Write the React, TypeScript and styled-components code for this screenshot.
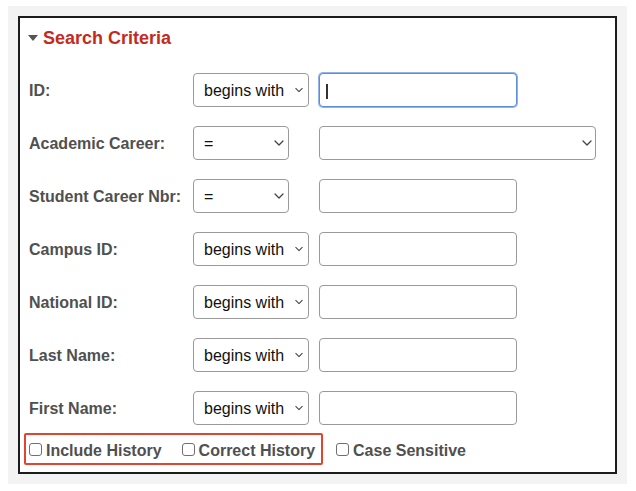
import React from "react";
import styled, { createGlobalStyle } from "styled-components";

const GlobalStyle = createGlobalStyle`
    html, body {
        margin: 0;
        padding: 0;
        background: #ffffff;
    }
    * {
        box-sizing: border-box;
    }
`;

const StyledFrame = styled.div`
    margin: 6px 9px 7px 8px;
    padding: 10px;
    background: #f3f3f3;
    font-family: "Liberation Sans", Arial, sans-serif;
`;

const StyledPanel = styled.div`
    border: 2px solid #1c1c1c;
    background: #ffffff;
    padding: 8px 0 7px 0;
`;

const StyledTitle = styled.div`
    display: flex;
    align-items: center;
    gap: 5px;
    padding-left: 8px;
    height: 24px;
    font-size: 18px;
    font-weight: bold;
    color: #c42b1c;
`;

const StyledTriangle = styled.span`
    width: 0;
    height: 0;
    border-left: 5px solid transparent;
    border-right: 5px solid transparent;
    border-top: 6px solid #555555;
    margin-top: -1px;
`;

const StyledForm = styled.div`
    display: grid;
    grid-template-columns: 164px 126px 1fr;
    grid-auto-rows: 34px;
    row-gap: 19px;
    align-items: center;
    margin-top: 23px;
    padding-left: 9px;
`;

const StyledLabel = styled.label`
    padding-top: 1px;
    font-size: 16px;
    font-weight: bold;
    color: #505050;
    white-space: nowrap;
`;

const StyledSelectWrap = styled.div<{ $width: number }>`
    position: relative;
    width: ${(p) => p.$width}px;
    height: 34px;
`;

const StyledSelect = styled.select`
    appearance: none;
    -webkit-appearance: none;
    width: 100%;
    height: 100%;
    margin: 0;
    padding: 0 20px 0 10px;
    border: 1px solid #9a9a9a;
    border-radius: 4px;
    background: #ffffff;
    font-family: "Liberation Sans", Arial, sans-serif;
    font-size: 16px;
    color: #111111;
    outline: none;
`;

const StyledChevron = styled.svg<{ $right: number }>`
    position: absolute;
    right: ${(p) => p.$right}px;
    top: 50%;
    transform: translateY(-50%);
    pointer-events: none;
`;

const StyledInputWrap = styled.div<{ $width: number }>`
    position: relative;
    width: ${(p) => p.$width}px;
    height: 34px;
`;

const StyledInput = styled.input<{ $focused?: boolean }>`
    width: 100%;
    height: 100%;
    margin: 0;
    padding: 0 8px;
    border: 1px solid ${(p) => (p.$focused ? "#5b8fdc" : "#9a9a9a")};
    box-shadow: ${(p) => (p.$focused ? "0 0 0 1px #8fb3ea" : "none")};
    border-radius: 4px;
    background: #ffffff;
    font-family: "Liberation Sans", Arial, sans-serif;
    font-size: 16px;
    outline: none;
`;

const StyledCaret = styled.span`
    position: absolute;
    left: 7px;
    top: 11px;
    width: 1.5px;
    height: 15px;
    background: #333333;
`;

const StyledCheckRow = styled.div`
    display: flex;
    align-items: center;
    margin-top: 8px;
    margin-left: 4px;
`;

const StyledHighlight = styled.div`
    display: flex;
    align-items: center;
    gap: 20px;
    height: 32px;
    padding: 3px 6px 0 3px;
    border: 2px solid #e2452f;
    border-radius: 2px;
`;

const StyledCheckItem = styled.label<{ $offset?: number }>`
    display: flex;
    align-items: center;
    gap: 4px;
    margin-left: ${(p) => p.$offset || 0}px;
    padding-top: ${(p) => (p.$offset ? 3 : 0)}px;
    font-size: 16px;
    font-weight: bold;
    color: #505050;
    white-space: nowrap;
`;

const StyledCheckbox = styled.input`
    appearance: none;
    -webkit-appearance: none;
    width: 13px;
    height: 13px;
    margin: -2px 0 0 0;
    border: 1px solid #6f6f6f;
    border-radius: 3px;
    background: #ffffff;
`;

const Chevron = ({ size, right }: { size: number; right: number }) => (
    <StyledChevron
        $right={right}
        width={size}
        height={size * 0.6}
        viewBox="0 0 10 6"
    >
        <path
            d="M1 1 L5 5 L9 1"
            fill="none"
            stroke="#444"
            strokeWidth="1.3"
            strokeLinecap="round"
            strokeLinejoin="round"
        />
    </StyledChevron>
);

const Select = ({ value, width, chevron, right }: { value: string; width: number; chevron: number; right: number }) => (
    <StyledSelectWrap $width={width}>
        <StyledSelect defaultValue={value}>
            <option value={value}>{value}</option>
        </StyledSelect>
        <Chevron size={chevron} right={right} />
    </StyledSelectWrap>
);

const rows = [
    { label: "ID:", op: "begins with", kind: "focus" },
    { label: "Academic Career:", op: "=", kind: "select" },
    { label: "Student Career Nbr:", op: "=", kind: "input" },
    { label: "Campus ID:", op: "begins with", kind: "input" },
    { label: "National ID:", op: "begins with", kind: "input" },
    { label: "Last Name:", op: "begins with", kind: "input" },
    { label: "First Name:", op: "begins with", kind: "input" },
];

export default function App() {
    return (
        <>
            <GlobalStyle />
            <StyledFrame>
                <StyledPanel>
                    <StyledTitle>
                        <StyledTriangle />
                        Search Criteria
                    </StyledTitle>
                    <StyledForm>
                        {rows.map((row) => (
                            <React.Fragment key={row.label}>
                                <StyledLabel>{row.label}</StyledLabel>
                                {row.op === "=" ? (
                                    <Select value="=" width={96} chevron={10} right={5} />
                                ) : (
                                    <Select value="begins with" width={116} chevron={8} right={6} />
                                )}
                                {row.kind === "select" ? (
                                    <Select value="" width={277} chevron={10} right={4} />
                                ) : (
                                    <StyledInputWrap $width={198}>
                                        <StyledInput $focused={row.kind === "focus"} />
                                        {row.kind === "focus" && <StyledCaret />}
                                    </StyledInputWrap>
                                )}
                            </React.Fragment>
                        ))}
                    </StyledForm>
                    <StyledCheckRow>
                        <StyledHighlight>
                            <StyledCheckItem>
                                <StyledCheckbox type="checkbox" />
                                Include History
                            </StyledCheckItem>
                            <StyledCheckItem>
                                <StyledCheckbox type="checkbox" />
                                Correct History
                            </StyledCheckItem>
                        </StyledHighlight>
                        <StyledCheckItem $offset={13}>
                            <StyledCheckbox type="checkbox" />
                            Case Sensitive
                        </StyledCheckItem>
                    </StyledCheckRow>
                </StyledPanel>
            </StyledFrame>
        </>
    );
}
